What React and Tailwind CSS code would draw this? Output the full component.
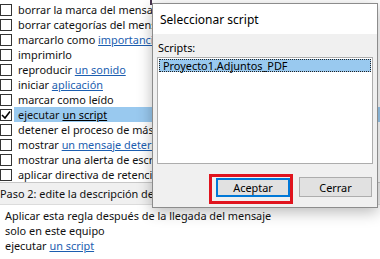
import React from "react";

const rows = [
  { text: "borrar la marca del mensaje" },
  { text: "borrar categorías del mensaje" },
  { text: "marcarlo como ", link: "importancia" },
  { text: "imprimirlo" },
  { text: "reproducir ", link: "un sonido" },
  { text: "iniciar ", link: "aplicación" },
  { text: "marcar como leído" },
  { text: "ejecutar ", link: "un script", checked: true },
  { text: "detener el proceso de más reglas" },
  { text: "mostrar ", link: "un mensaje determinado en la ventana" },
  { text: "mostrar una alerta de escritorio" },
  { text: "aplicar directiva de retención" },
];

function Checkbox({ checked }) {
  return (
    <div className="w-[12px] h-[12px] border border-[#333333] bg-white flex items-center justify-center shrink-0">
      {checked && (
        <svg width="10" height="10" viewBox="0 0 10 10">
          <path d="M1 5 L4 8 L9 1.5" fill="none" stroke="#000" strokeWidth="1.6" />
        </svg>
      )}
    </div>
  );
}

function RuleRow({ row }) {
  return (
    <div className="h-[15px] flex items-center">
      <Checkbox checked={row.checked} />
      <div
        className={`h-[15px] pl-[4px] ml-[2px] flex-1 whitespace-nowrap ${
          row.checked ? "bg-[#99c9ef]" : ""
        }`}
      >
        {row.text}
        {row.link && (
          <span className={`underline ${row.checked ? "text-black" : "text-[#1c5eb0]"}`}>{row.link}</span>
        )}
      </div>
    </div>
  );
}

export default function App() {
  return (
    <div
      className="relative w-[380px] h-[259px] overflow-hidden bg-white text-[10.9px] leading-[15px] text-[#111111]"
      style={{ fontFamily: '"Noto Sans", "Open Sans", sans-serif' }}
    >
      <div className="pt-[2px] h-[183px] border-b border-[#c8c8c8]">
        {rows.map((r, i) => (
          <RuleRow key={i} row={r} />
        ))}
      </div>
      <div className="h-[22px] bg-[#f0f0f0] flex items-center border-b border-[#dcdcdc] whitespace-nowrap">
        <span>Paso 2: edite la descripción de la regla</span>
      </div>
      <div className="pl-[5px] pt-[3px] whitespace-nowrap">
        <div>Aplicar esta regla después de la llegada del mensaje</div>
        <div>solo en este equipo</div>
        <div>
          ejecutar <span className="underline text-[#1c5eb0]">un script</span>
        </div>
      </div>

      <div className="absolute left-[150px] top-0 w-[2px] h-[5px] bg-[#4a3550]" />

      <div className="absolute left-[152px] top-[3px] w-[226px] h-[205px] border border-[#8c8c8c] bg-[#f0f0f0] shadow-[0_4px_14px_rgba(0,0,0,0.28)] flex flex-col">
        <div className="h-[30px] bg-white flex items-center pl-[7px] text-[12px] text-black">
          Seleccionar script
        </div>
        <div className="flex-1 px-[4px] pt-[6px] flex flex-col">
          <div className="pl-[1px] text-black">Scripts:</div>
          <div className="mt-[2px] h-[107px] border border-[#adadad] bg-white p-[1px]">
            <div className="h-[13px] bg-[#99c9ef] border border-dotted border-[#222] flex items-center pl-[3px] leading-[13px] text-black">
              Proyecto1.Adjuntos_PDF
            </div>
          </div>
          <div className="flex justify-end items-start gap-[6px] mt-[10px] pr-[1px]">
            <div className="border-[3px] border-[#e0141e] pt-[1px] pl-[4px] pb-[4px]">
              <div className="w-[74px] h-[19px] border-2 border-[#0078d7] bg-[#e1e1e1] flex items-center justify-center text-black">
                Aceptar
              </div>
            </div>
            <div className="mt-[3px] w-[73px] h-[20px] border border-[#adadad] bg-[#e1e1e1] flex items-center justify-center text-black">
              Cerrar
            </div>
          </div>
        </div>
      </div>
    </div>
  );
}
